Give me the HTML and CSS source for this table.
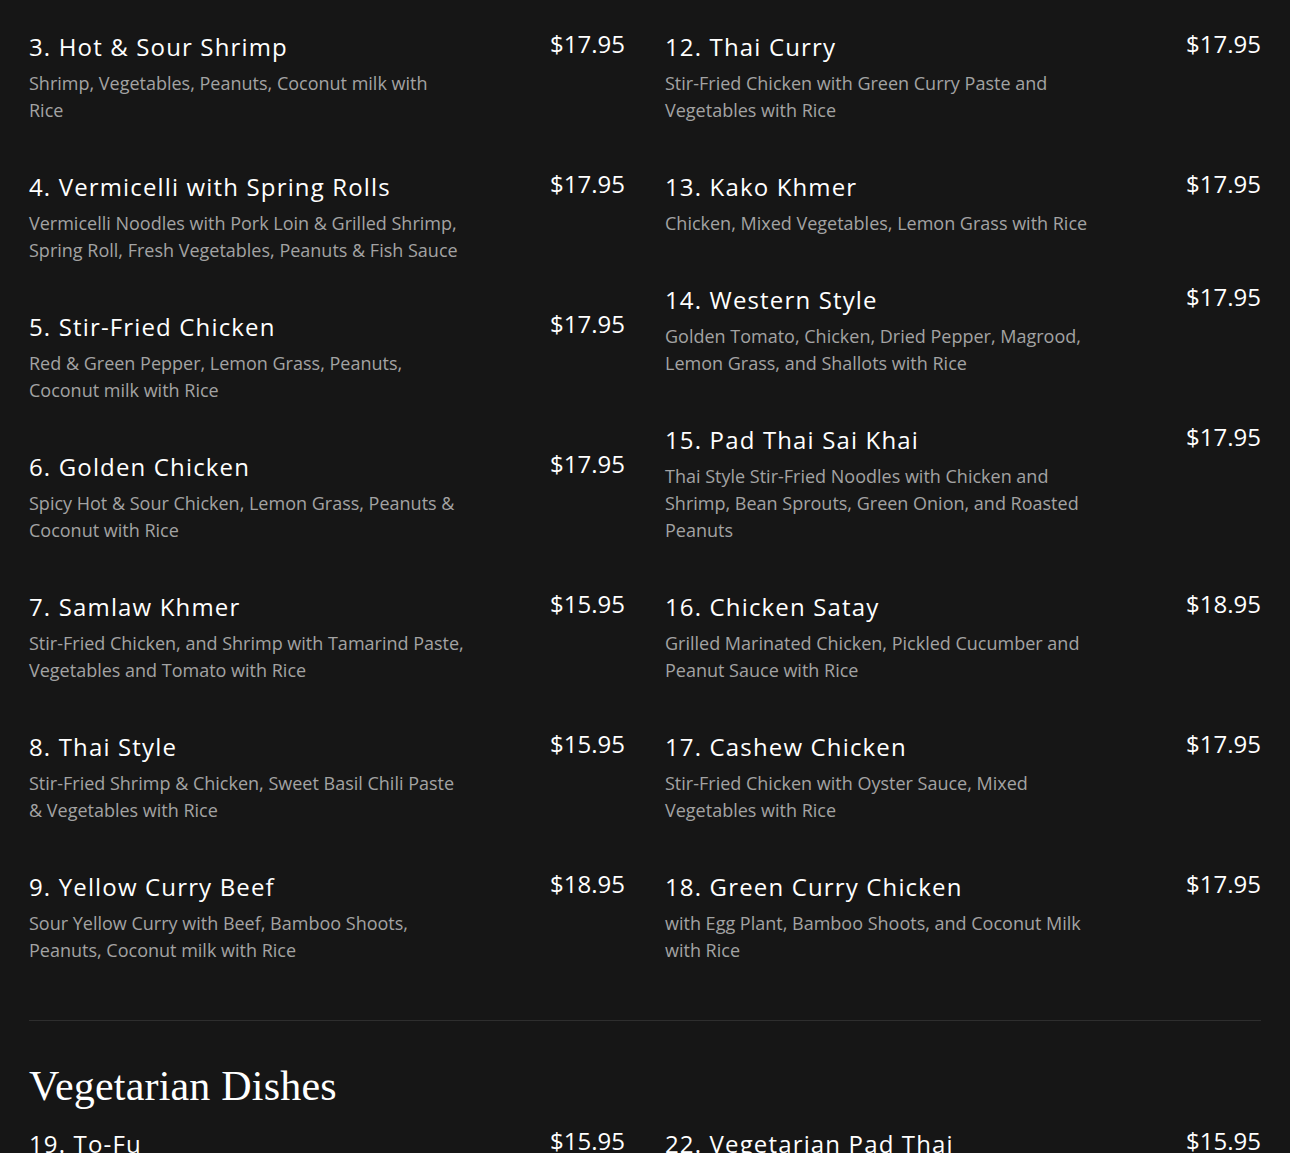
FILE: index.html
```html
<!DOCTYPE html>
<html lang="en">
<head>
<meta charset="utf-8">
<title>Menu</title>
<link rel="stylesheet" href="styles.css">
</head>
<body>
<main class="page">
  <section class="section">
    <div class="grid">
      <div class="col">
        <div class="item"><div class="row"><h3 class="name">3. Hot &amp; Sour Shrimp</h3><span class="price">$17.95</span></div><p class="desc">Shrimp, Vegetables, Peanuts, Coconut milk with Rice</p></div>
        <div class="item"><div class="row"><h3 class="name">4. Vermicelli with Spring Rolls</h3><span class="price">$17.95</span></div><p class="desc">Vermicelli Noodles with Pork Loin &amp; Grilled Shrimp, Spring Roll, Fresh Vegetables, Peanuts &amp; Fish Sauce</p></div>
        <div class="item"><div class="row"><h3 class="name">5. Stir-Fried Chicken</h3><span class="price">$17.95</span></div><p class="desc">Red &amp; Green Pepper, Lemon Grass, Peanuts, Coconut milk with Rice</p></div>
        <div class="item"><div class="row"><h3 class="name">6. Golden Chicken</h3><span class="price">$17.95</span></div><p class="desc">Spicy Hot &amp; Sour Chicken, Lemon Grass, Peanuts &amp; Coconut with Rice</p></div>
        <div class="item"><div class="row"><h3 class="name">7. Samlaw Khmer</h3><span class="price">$15.95</span></div><p class="desc">Stir-Fried Chicken, and Shrimp with Tamarind Paste, Vegetables and Tomato with Rice</p></div>
        <div class="item"><div class="row"><h3 class="name">8. Thai Style</h3><span class="price">$15.95</span></div><p class="desc">Stir-Fried Shrimp &amp; Chicken, Sweet Basil Chili Paste &amp; Vegetables with Rice</p></div>
        <div class="item"><div class="row"><h3 class="name">9. Yellow Curry Beef</h3><span class="price">$18.95</span></div><p class="desc">Sour Yellow Curry with Beef, Bamboo Shoots, Peanuts, Coconut milk with Rice</p></div>
      </div>
      <div class="col">
        <div class="item"><div class="row"><h3 class="name">12. Thai Curry</h3><span class="price">$17.95</span></div><p class="desc">Stir-Fried Chicken with Green Curry Paste and Vegetables with Rice</p></div>
        <div class="item"><div class="row"><h3 class="name">13. Kako Khmer</h3><span class="price">$17.95</span></div><p class="desc">Chicken, Mixed Vegetables, Lemon Grass with Rice</p></div>
        <div class="item"><div class="row"><h3 class="name">14. Western Style</h3><span class="price">$17.95</span></div><p class="desc">Golden Tomato, Chicken, Dried Pepper, Magrood, Lemon Grass, and Shallots with Rice</p></div>
        <div class="item"><div class="row"><h3 class="name">15. Pad Thai Sai Khai</h3><span class="price">$17.95</span></div><p class="desc">Thai Style Stir-Fried Noodles with Chicken and Shrimp, Bean Sprouts, Green Onion, and Roasted Peanuts</p></div>
        <div class="item"><div class="row"><h3 class="name">16. Chicken Satay</h3><span class="price">$18.95</span></div><p class="desc">Grilled Marinated Chicken, Pickled Cucumber and Peanut Sauce with Rice</p></div>
        <div class="item"><div class="row"><h3 class="name">17. Cashew Chicken</h3><span class="price">$17.95</span></div><p class="desc">Stir-Fried Chicken with Oyster Sauce, Mixed Vegetables with Rice</p></div>
        <div class="item"><div class="row"><h3 class="name">18. Green Curry Chicken</h3><span class="price">$17.95</span></div><p class="desc">with Egg Plant, Bamboo Shoots, and Coconut Milk with Rice</p></div>
      </div>
    </div>
  </section>
  <section class="section divided">
    <h2 class="heading">Vegetarian Dishes</h2>
    <div class="grid">
      <div class="col">
        <div class="item"><div class="row"><h3 class="name">19. To-Fu</h3><span class="price">$15.95</span></div><p class="desc">Stir-Fried To-Fu with Mixed Vegetables with Rice</p></div>
      </div>
      <div class="col">
        <div class="item"><div class="row"><h3 class="name">22. Vegetarian Pad Thai</h3><span class="price">$15.95</span></div><p class="desc">Stir-Fried Noodles with To-Fu, Bean Sprouts and Peanuts</p></div>
      </div>
    </div>
  </section>
</main>
</body>
</html>
```

FILE: styles.css
```css
html, body {
  margin: 0;
  padding: 0;
  background: #161616;
}
body {
  font-family: "Open Sans", "Noto Sans", sans-serif;
  color: #ffffff;
  height: 1153px;
  overflow: hidden;
}
.page {
  padding: 32px 29px 0 29px;
}
.grid {
  display: grid;
  grid-template-columns: 1fr 1fr;
  column-gap: 40px;
}
.col {
  display: flex;
  flex-direction: column;
}
.item {
  margin-bottom: 48px;
}
.row {
  display: flex;
  justify-content: space-between;
  align-items: flex-start;
}
.name {
  margin: 0;
  font-size: 24px;
  font-weight: 400;
  line-height: 30px;
  letter-spacing: 1.15px;
  color: #ffffff;
}
.price {
  font-size: 24px;
  line-height: 24px;
  color: #ffffff;
  white-space: nowrap;
}
.desc {
  margin: 8px 0 0 0;
  max-width: 435px;
  font-size: 18px;
  line-height: 27px;
  color: #a3a3a3;
}
.divided {
  margin-top: 8px;
  border-top: 1px solid #2e2e2e;
}
.heading {
  margin: 37px 0 15px 0;
  font-family: "Liberation Serif", "DejaVu Serif", serif;
  font-weight: 400;
  font-size: 42px;
  line-height: 56px;
  letter-spacing: 0.2px;
  color: #ffffff;
}
```
